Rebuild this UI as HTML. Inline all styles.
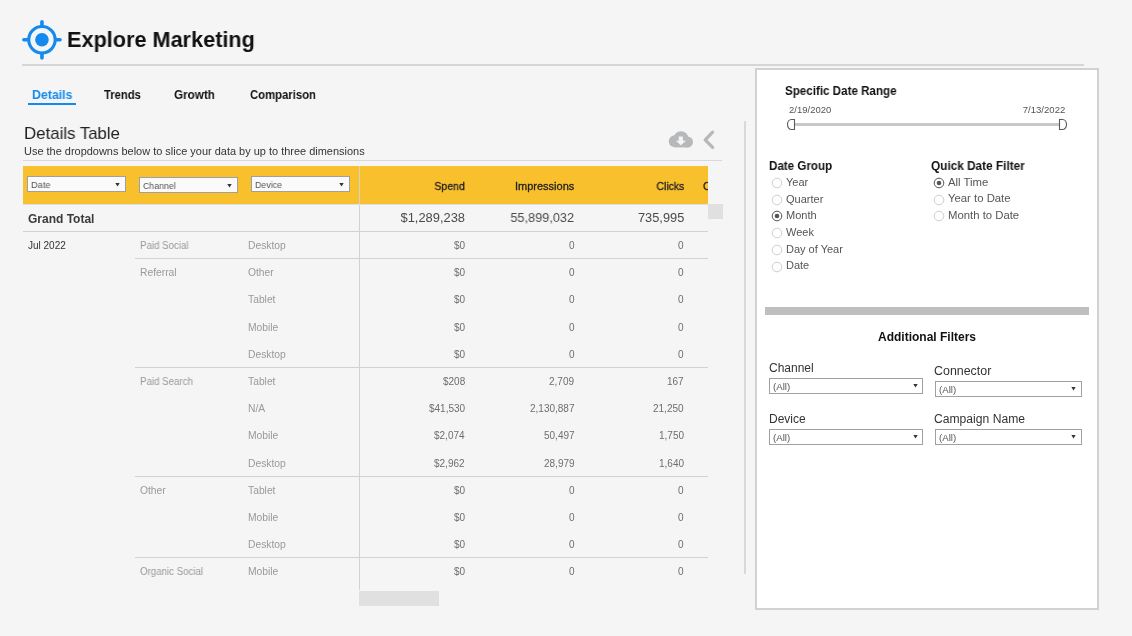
<!DOCTYPE html>
<html><head><meta charset="utf-8">
<style>
*{margin:0;padding:0;box-sizing:border-box}
html,body{width:1132px;height:636px;overflow:hidden;background:#f5f5f5;font-family:"Liberation Sans",sans-serif;color:#000;position:relative}
.t{position:absolute;white-space:nowrap;line-height:1;will-change:transform}
.b{position:absolute}
</style></head><body>
<svg class="b" style="left:18px;top:16px" width="48" height="48" viewBox="0 0 48 48">
<circle cx="23.96" cy="23.77" r="13.2" fill="none" stroke="#148aee" stroke-width="3.1"/>
<circle cx="23.96" cy="23.77" r="6.8" fill="#148aee"/>
<path d="M23.96 5.7V10M23.96 37.5V41.9M5.9 23.77H10.2M37.7 23.77H42" stroke="#148aee" stroke-width="3.6" stroke-linecap="round"/>
</svg>
<div class="t" style="top:28.57px;font-size:22px;color:#111;font-weight:bold;left:67.00px;transform:scaleX(0.985);transform-origin:left 0;">Explore Marketing</div>
<div class="b" style="left:22px;top:64px;width:1062px;height:2px;background:#d6d6d6;"></div>
<div class="t" style="top:88.52px;font-size:12.5px;color:#148aee;font-weight:bold;left:31.60px;transform:scaleX(0.986);transform-origin:left 0;">Details</div>
<div class="b" style="left:28px;top:103px;width:48px;height:2px;background:#148aee;"></div>
<div class="t" style="top:88.52px;font-size:12.5px;color:#111;font-weight:bold;left:104.30px;transform:scaleX(0.898);transform-origin:left 0;">Trends</div>
<div class="t" style="top:88.52px;font-size:12.5px;color:#111;font-weight:bold;left:174.10px;transform:scaleX(0.935);transform-origin:left 0;">Growth</div>
<div class="t" style="top:88.52px;font-size:12.5px;color:#111;font-weight:bold;left:249.50px;transform:scaleX(0.904);transform-origin:left 0;">Comparison</div>
<div class="t" style="top:124.71px;font-size:17px;color:#222;left:24.20px;transform:scaleX(0.989);transform-origin:left 0;">Details Table</div>
<div class="t" style="top:145.91px;font-size:10.5px;color:#333;left:24.30px;transform:scaleX(1.044);transform-origin:left 0;">Use the dropdowns below to slice your data by up to three dimensions</div>
<div class="b" style="left:23px;top:160px;width:699px;height:1px;background:#d9d9d9;"></div>
<svg class="b" style="left:660px;top:122px" width="64" height="34" viewBox="0 0 64 34">
<g fill="#b7b8b9">
<circle cx="21" cy="16.8" r="7.6"/>
<circle cx="14.8" cy="19.2" r="6"/>
<circle cx="27.5" cy="20" r="5.5"/>
<rect x="14.8" y="18" width="12.7" height="7.4"/>
</g>
<path d="M18.7 14.4H22.9V18.7H26L20.8 23.3L15.8 18.7H18.7Z" fill="#f5f5f5"/>
<path d="M52.6 10.2L45.2 17.9L52.6 25.4" fill="none" stroke="#b7b8b9" stroke-width="3.3" stroke-linecap="round" stroke-linejoin="round"/>
</svg>
<div class="b" style="left:23px;top:166px;width:685px;height:38px;background:#f9c02e;"></div>
<div class="b" style="left:27px;top:176px;width:99px;height:16px;background:#fafafa;border:1px solid #a0a0a0"></div>
<div class="t" style="top:180.06px;font-size:9.5px;color:#555;left:31.00px;transform:scaleX(0.972);transform-origin:left 0;">Date</div>
<svg class="b" style="left:115.3px;top:183px" width="5" height="4" viewBox="0 0 5 4"><path d="M0.3 0H4.7L2.5 3.4Z" fill="#333"/></svg>
<div class="b" style="left:139px;top:177px;width:99px;height:16px;background:#fafafa;border:1px solid #a0a0a0"></div>
<div class="t" style="top:181.06px;font-size:9.5px;color:#555;left:142.80px;transform:scaleX(0.924);transform-origin:left 0;">Channel</div>
<svg class="b" style="left:227.4px;top:183.5px" width="5" height="4" viewBox="0 0 5 4"><path d="M0.3 0H4.7L2.5 3.4Z" fill="#333"/></svg>
<div class="b" style="left:251px;top:176px;width:99px;height:16px;background:#fafafa;border:1px solid #a0a0a0"></div>
<div class="t" style="top:180.06px;font-size:9.5px;color:#555;left:255.00px;transform:scaleX(0.930);transform-origin:left 0;">Device</div>
<svg class="b" style="left:339.2px;top:183px" width="5" height="4" viewBox="0 0 5 4"><path d="M0.3 0H4.7L2.5 3.4Z" fill="#333"/></svg>
<div class="b" style="left:359px;top:166px;width:1px;height:424px;background:#d2d2d2;"></div>
<div class="t" style="top:180.79px;font-size:11px;color:#222;right:667.00px;transform:scaleX(0.956);transform-origin:right 0;-webkit-text-stroke:0.3px #222">Spend</div>
<div class="t" style="top:180.79px;font-size:11px;color:#222;right:557.80px;-webkit-text-stroke:0.3px #222">Impressions</div>
<div class="t" style="top:180.79px;font-size:11px;color:#222;right:448.00px;transform:scaleX(0.951);transform-origin:right 0;-webkit-text-stroke:0.3px #222">Clicks</div>
<div class="b" style="left:702px;top:166px;width:6px;height:38px;overflow:hidden"><div class="t" style="left:0.5px;top:14.8px;font-size:11px;color:#222;-webkit-text-stroke:0.3px #222">C</div></div>
<div class="t" style="top:213.04px;font-size:12px;color:#3a3a3a;font-weight:bold;left:28.00px;">Grand Total</div>
<div class="t" style="top:211.56px;font-size:12.8px;color:#4a4a4a;right:667.00px;transform:scaleX(1.008);transform-origin:right 0;">$1,289,238</div>
<div class="t" style="top:211.56px;font-size:12.8px;color:#4a4a4a;right:557.80px;transform:scaleX(0.993);transform-origin:right 0;">55,899,032</div>
<div class="t" style="top:211.56px;font-size:12.8px;color:#4a4a4a;right:448.00px;">735,995</div>
<div class="b" style="left:708px;top:204px;width:15px;height:15px;background:#e0e0e0;"></div>
<div class="b" style="left:23px;top:204px;width:685px;height:1px;background:#dfe0e6;"></div>
<div class="b" style="left:23px;top:231px;width:685px;height:1px;background:#d2d2d2;"></div>
<div class="t" style="top:240.93px;font-size:10px;color:#333;left:28.00px;">Jul 2022</div>
<div class="t" style="top:240.93px;font-size:10px;color:#999;left:140.00px;transform:scaleX(0.970);transform-origin:left 0;">Paid Social</div>
<div class="t" style="top:240.93px;font-size:10px;color:#999;left:248.30px;transform:scaleX(1.030);transform-origin:left 0;">Desktop</div>
<div class="t" style="top:240.93px;font-size:10px;color:#6e6e6e;right:667.00px;">$0</div>
<div class="t" style="top:240.93px;font-size:10px;color:#6e6e6e;right:557.80px;">0</div>
<div class="t" style="top:240.93px;font-size:10px;color:#6e6e6e;right:448.00px;">0</div>
<div class="b" style="left:135px;top:258px;width:573px;height:1px;background:#d2d2d2;"></div>
<div class="t" style="top:268.13px;font-size:10px;color:#999;left:140.00px;transform:scaleX(1.030);transform-origin:left 0;">Referral</div>
<div class="t" style="top:268.13px;font-size:10px;color:#999;left:248.30px;transform:scaleX(1.030);transform-origin:left 0;">Other</div>
<div class="t" style="top:268.13px;font-size:10px;color:#6e6e6e;right:667.00px;">$0</div>
<div class="t" style="top:268.13px;font-size:10px;color:#6e6e6e;right:557.80px;">0</div>
<div class="t" style="top:268.13px;font-size:10px;color:#6e6e6e;right:448.00px;">0</div>
<div class="t" style="top:295.33px;font-size:10px;color:#999;left:248.30px;transform:scaleX(1.030);transform-origin:left 0;">Tablet</div>
<div class="t" style="top:295.33px;font-size:10px;color:#6e6e6e;right:667.00px;">$0</div>
<div class="t" style="top:295.33px;font-size:10px;color:#6e6e6e;right:557.80px;">0</div>
<div class="t" style="top:295.33px;font-size:10px;color:#6e6e6e;right:448.00px;">0</div>
<div class="t" style="top:322.53px;font-size:10px;color:#999;left:248.30px;transform:scaleX(1.030);transform-origin:left 0;">Mobile</div>
<div class="t" style="top:322.53px;font-size:10px;color:#6e6e6e;right:667.00px;">$0</div>
<div class="t" style="top:322.53px;font-size:10px;color:#6e6e6e;right:557.80px;">0</div>
<div class="t" style="top:322.53px;font-size:10px;color:#6e6e6e;right:448.00px;">0</div>
<div class="t" style="top:349.73px;font-size:10px;color:#999;left:248.30px;transform:scaleX(1.030);transform-origin:left 0;">Desktop</div>
<div class="t" style="top:349.73px;font-size:10px;color:#6e6e6e;right:667.00px;">$0</div>
<div class="t" style="top:349.73px;font-size:10px;color:#6e6e6e;right:557.80px;">0</div>
<div class="t" style="top:349.73px;font-size:10px;color:#6e6e6e;right:448.00px;">0</div>
<div class="b" style="left:135px;top:367px;width:573px;height:1px;background:#d2d2d2;"></div>
<div class="t" style="top:376.93px;font-size:10px;color:#999;left:140.00px;transform:scaleX(0.970);transform-origin:left 0;">Paid Search</div>
<div class="t" style="top:376.93px;font-size:10px;color:#999;left:248.30px;transform:scaleX(1.030);transform-origin:left 0;">Tablet</div>
<div class="t" style="top:376.93px;font-size:10px;color:#6e6e6e;right:667.00px;">$208</div>
<div class="t" style="top:376.93px;font-size:10px;color:#6e6e6e;right:557.80px;">2,709</div>
<div class="t" style="top:376.93px;font-size:10px;color:#6e6e6e;right:448.00px;">167</div>
<div class="t" style="top:404.13px;font-size:10px;color:#999;left:248.30px;transform:scaleX(1.030);transform-origin:left 0;">N/A</div>
<div class="t" style="top:404.13px;font-size:10px;color:#6e6e6e;right:667.00px;">$41,530</div>
<div class="t" style="top:404.13px;font-size:10px;color:#6e6e6e;right:557.80px;">2,130,887</div>
<div class="t" style="top:404.13px;font-size:10px;color:#6e6e6e;right:448.00px;">21,250</div>
<div class="t" style="top:431.33px;font-size:10px;color:#999;left:248.30px;transform:scaleX(1.030);transform-origin:left 0;">Mobile</div>
<div class="t" style="top:431.33px;font-size:10px;color:#6e6e6e;right:667.00px;">$2,074</div>
<div class="t" style="top:431.33px;font-size:10px;color:#6e6e6e;right:557.80px;">50,497</div>
<div class="t" style="top:431.33px;font-size:10px;color:#6e6e6e;right:448.00px;">1,750</div>
<div class="t" style="top:458.53px;font-size:10px;color:#999;left:248.30px;transform:scaleX(1.030);transform-origin:left 0;">Desktop</div>
<div class="t" style="top:458.53px;font-size:10px;color:#6e6e6e;right:667.00px;">$2,962</div>
<div class="t" style="top:458.53px;font-size:10px;color:#6e6e6e;right:557.80px;">28,979</div>
<div class="t" style="top:458.53px;font-size:10px;color:#6e6e6e;right:448.00px;">1,640</div>
<div class="b" style="left:135px;top:476px;width:573px;height:1px;background:#d2d2d2;"></div>
<div class="t" style="top:485.73px;font-size:10px;color:#999;left:140.00px;transform:scaleX(1.030);transform-origin:left 0;">Other</div>
<div class="t" style="top:485.73px;font-size:10px;color:#999;left:248.30px;transform:scaleX(1.030);transform-origin:left 0;">Tablet</div>
<div class="t" style="top:485.73px;font-size:10px;color:#6e6e6e;right:667.00px;">$0</div>
<div class="t" style="top:485.73px;font-size:10px;color:#6e6e6e;right:557.80px;">0</div>
<div class="t" style="top:485.73px;font-size:10px;color:#6e6e6e;right:448.00px;">0</div>
<div class="t" style="top:512.93px;font-size:10px;color:#999;left:248.30px;transform:scaleX(1.030);transform-origin:left 0;">Mobile</div>
<div class="t" style="top:512.93px;font-size:10px;color:#6e6e6e;right:667.00px;">$0</div>
<div class="t" style="top:512.93px;font-size:10px;color:#6e6e6e;right:557.80px;">0</div>
<div class="t" style="top:512.93px;font-size:10px;color:#6e6e6e;right:448.00px;">0</div>
<div class="t" style="top:540.13px;font-size:10px;color:#999;left:248.30px;transform:scaleX(1.030);transform-origin:left 0;">Desktop</div>
<div class="t" style="top:540.13px;font-size:10px;color:#6e6e6e;right:667.00px;">$0</div>
<div class="t" style="top:540.13px;font-size:10px;color:#6e6e6e;right:557.80px;">0</div>
<div class="t" style="top:540.13px;font-size:10px;color:#6e6e6e;right:448.00px;">0</div>
<div class="b" style="left:135px;top:557px;width:573px;height:1px;background:#d2d2d2;"></div>
<div class="t" style="top:567.33px;font-size:10px;color:#999;left:140.00px;transform:scaleX(0.970);transform-origin:left 0;">Organic Social</div>
<div class="t" style="top:567.33px;font-size:10px;color:#999;left:248.30px;transform:scaleX(1.030);transform-origin:left 0;">Mobile</div>
<div class="t" style="top:567.33px;font-size:10px;color:#6e6e6e;right:667.00px;">$0</div>
<div class="t" style="top:567.33px;font-size:10px;color:#6e6e6e;right:557.80px;">0</div>
<div class="t" style="top:567.33px;font-size:10px;color:#6e6e6e;right:448.00px;">0</div>
<div class="b" style="left:359px;top:591px;width:80px;height:15px;background:#e0e0e0;"></div>
<div class="b" style="left:744px;top:121px;width:2px;height:453px;background:#d9d9d9;"></div>
<div class="b" style="left:755px;top:68px;width:344px;height:542px;background:#fff;border:2px solid #d2d2d2;box-sizing:border-box"></div>
<div class="t" style="top:85.14px;font-size:12px;color:#111;font-weight:bold;left:785.20px;transform:scaleX(0.967);transform-origin:left 0;">Specific Date Range</div>
<div class="t" style="top:105.16px;font-size:9.5px;color:#555;left:788.70px;">2/19/2020</div>
<div class="t" style="top:105.16px;font-size:9.5px;color:#555;right:66.80px;transform:scaleX(1.006);transform-origin:right 0;">7/13/2022</div>
<div class="b" style="left:792px;top:123px;width:268px;height:3px;background:#c8c8c8;"></div>
<svg class="b" style="left:785px;top:117px" width="284" height="15" viewBox="0 0 284 15">
<path d="M9.5 2.5H6.5A4 5 0 0 0 6.5 12.5H9.5Z" fill="#fff" stroke="#5a5a5a" stroke-width="1.1"/>
<path d="M274.5 2.5H277.5A4 5 0 0 1 277.5 12.5H274.5Z" fill="#fff" stroke="#5a5a5a" stroke-width="1.1"/>
</svg>
<div class="t" style="top:159.94px;font-size:12px;color:#111;font-weight:bold;left:769.00px;transform:scaleX(0.967);transform-origin:left 0;">Date Group</div>
<div class="t" style="top:159.94px;font-size:12px;color:#111;font-weight:bold;left:931.00px;transform:scaleX(0.983);transform-origin:left 0;">Quick Date Filter</div>
<svg class="b" style="left:770.6px;top:176.8px" width="12" height="12" viewBox="0 0 12 12"><circle cx="6" cy="6" r="4.8" fill="#fff" stroke="#cfcfcf" stroke-width="1"/></svg>
<div class="t" style="top:177.09px;font-size:11px;color:#555;left:785.60px;">Year</div>
<svg class="b" style="left:770.6px;top:193.60000000000002px" width="12" height="12" viewBox="0 0 12 12"><circle cx="6" cy="6" r="4.8" fill="#fff" stroke="#cfcfcf" stroke-width="1"/></svg>
<div class="t" style="top:193.74px;font-size:11px;color:#555;left:785.60px;">Quarter</div>
<svg class="b" style="left:770.6px;top:210.4px" width="12" height="12" viewBox="0 0 12 12"><circle cx="6" cy="6" r="4.8" fill="#fff" stroke="#555" stroke-width="1"/><circle cx="6" cy="6" r="2.3" fill="#555"/></svg>
<div class="t" style="top:210.39px;font-size:11px;color:#555;left:785.60px;">Month</div>
<svg class="b" style="left:770.6px;top:227.20000000000002px" width="12" height="12" viewBox="0 0 12 12"><circle cx="6" cy="6" r="4.8" fill="#fff" stroke="#cfcfcf" stroke-width="1"/></svg>
<div class="t" style="top:227.04px;font-size:11px;color:#555;left:785.60px;">Week</div>
<svg class="b" style="left:770.6px;top:244.0px" width="12" height="12" viewBox="0 0 12 12"><circle cx="6" cy="6" r="4.8" fill="#fff" stroke="#cfcfcf" stroke-width="1"/></svg>
<div class="t" style="top:243.69px;font-size:11px;color:#555;left:785.60px;">Day of Year</div>
<svg class="b" style="left:770.6px;top:260.8px" width="12" height="12" viewBox="0 0 12 12"><circle cx="6" cy="6" r="4.8" fill="#fff" stroke="#cfcfcf" stroke-width="1"/></svg>
<div class="t" style="top:260.34px;font-size:11px;color:#555;left:785.60px;">Date</div>
<svg class="b" style="left:932.8px;top:177.0px" width="12" height="12" viewBox="0 0 12 12"><circle cx="6" cy="6" r="4.8" fill="#fff" stroke="#555" stroke-width="1"/><circle cx="6" cy="6" r="2.3" fill="#555"/></svg>
<div class="t" style="top:176.59px;font-size:11px;color:#555;left:947.80px;transform:scaleX(1.030);transform-origin:left 0;">All Time</div>
<svg class="b" style="left:932.8px;top:193.5px" width="12" height="12" viewBox="0 0 12 12"><circle cx="6" cy="6" r="4.8" fill="#fff" stroke="#cfcfcf" stroke-width="1"/></svg>
<div class="t" style="top:193.39px;font-size:11px;color:#555;left:947.80px;transform:scaleX(1.030);transform-origin:left 0;">Year to Date</div>
<svg class="b" style="left:932.8px;top:210.0px" width="12" height="12" viewBox="0 0 12 12"><circle cx="6" cy="6" r="4.8" fill="#fff" stroke="#cfcfcf" stroke-width="1"/></svg>
<div class="t" style="top:210.19px;font-size:11px;color:#555;left:947.80px;transform:scaleX(1.030);transform-origin:left 0;">Month to Date</div>
<div class="b" style="left:765px;top:307px;width:324px;height:8px;background:#bfbfbf;"></div>
<div class="t" style="top:331.04px;font-size:12px;color:#111;font-weight:bold;left:877.90px;">Additional Filters</div>
<div class="t" style="top:361.84px;font-size:12px;color:#333;left:768.60px;">Channel</div>
<div class="b" style="left:769px;top:378px;width:154px;height:16px;background:#fff;border:1px solid #a0a0a0"></div>
<div class="t" style="top:382.68px;font-size:9px;color:#555;left:772.60px;transform:scaleX(1.075);transform-origin:left 0;">(All)</div>
<svg class="b" style="left:912.7px;top:384.4px" width="5" height="4" viewBox="0 0 5 4"><path d="M0.3 0H4.7L2.5 3.4Z" fill="#333"/></svg>
<div class="t" style="top:365.04px;font-size:12px;color:#333;left:934.00px;transform:scaleX(1.035);transform-origin:left 0;">Connector</div>
<div class="b" style="left:935px;top:381px;width:147px;height:16px;background:#fff;border:1px solid #a0a0a0"></div>
<div class="t" style="top:385.68px;font-size:9px;color:#555;left:938.50px;transform:scaleX(1.075);transform-origin:left 0;">(All)</div>
<svg class="b" style="left:1071.0px;top:387.4px" width="5" height="4" viewBox="0 0 5 4"><path d="M0.3 0H4.7L2.5 3.4Z" fill="#333"/></svg>
<div class="t" style="top:413.14px;font-size:12px;color:#333;left:768.60px;">Device</div>
<div class="b" style="left:769px;top:429px;width:154px;height:16px;background:#fff;border:1px solid #a0a0a0"></div>
<div class="t" style="top:433.68px;font-size:9px;color:#555;left:772.60px;transform:scaleX(1.075);transform-origin:left 0;">(All)</div>
<svg class="b" style="left:912.7px;top:435.4px" width="5" height="4" viewBox="0 0 5 4"><path d="M0.3 0H4.7L2.5 3.4Z" fill="#333"/></svg>
<div class="t" style="top:413.14px;font-size:12px;color:#333;left:934.30px;transform:scaleX(1.011);transform-origin:left 0;">Campaign Name</div>
<div class="b" style="left:935px;top:429px;width:147px;height:16px;background:#fff;border:1px solid #a0a0a0"></div>
<div class="t" style="top:433.68px;font-size:9px;color:#555;left:938.50px;transform:scaleX(1.075);transform-origin:left 0;">(All)</div>
<svg class="b" style="left:1071.0px;top:435.4px" width="5" height="4" viewBox="0 0 5 4"><path d="M0.3 0H4.7L2.5 3.4Z" fill="#333"/></svg>
</body></html>
